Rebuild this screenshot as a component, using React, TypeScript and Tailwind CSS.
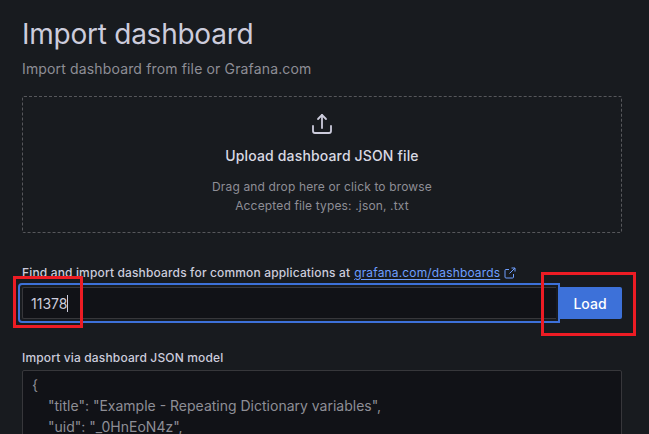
export default function App() {
  return (
    <div className="relative h-[434px] w-[649px] overflow-hidden bg-[#181b1f] pl-[22px] pr-[27px] pt-[16px] font-['Inter',sans-serif] text-[#ccccdc]">
      <h1 className="h-[36px] text-[28px] leading-[36px] font-normal tracking-[-0.25px]">Import dashboard</h1>
      <p className="mt-[6px] text-[14px] leading-[21px] tracking-[0.15px] text-[#8e8e96]">Import dashboard from file or Grafana.com</p>

      <div className="mt-[17px] flex h-[137px] flex-col items-center rounded-[2px] border border-dashed border-[#56575b] pt-[15px]">
        <svg width="24" height="24" viewBox="0 0 24 24" fill="none" stroke="#ccccdc" strokeWidth="1.8" strokeLinecap="round" strokeLinejoin="round">
          <path d="M3 14v5a2 2 0 0 0 2 2h14a2 2 0 0 0 2-2v-5" />
          <path d="M12 16V3" />
          <path d="M8 7l4-4 4 4" />
        </svg>
        <div className="mt-[8px] text-[14px] leading-[24px] font-medium tracking-[0.15px] text-[#d8d9e3]">Upload dashboard JSON file</div>
        <div className="mt-[9px] text-center text-[12px] leading-[19px] tracking-[0.15px] text-[#8e8e96]">
          <div>Drag and drop here or click to browse</div>
          <div>Accepted file types: .json, .txt</div>
        </div>
      </div>

      <div className="mt-[32px] flex h-[16px] items-center text-[12px] font-medium tracking-[0.15px] text-[#ccccdc]">
        <span>Find and import dashboards for common applications at</span>
        <span className="ml-[4px] font-normal text-[#6e9fff] underline underline-offset-2">grafana.com/dashboards</span>
        <svg className="ml-[4px]" width="12" height="12" viewBox="0 0 12 12" fill="none" stroke="#6e9fff" strokeWidth="1">
          <path d="M9.5 7v3a1 1 0 0 1-1 1H2a1 1 0 0 1-1-1V3.500a1 1 0 0 1 1-1h3" />
          <path d="M7.500 1H11v3.500M11 1L5.500 6.500" />
        </svg>
      </div>

      <div className="mt-[2px] flex items-center">
        <div className="-ml-[4px] flex h-[40px] w-[542px] shrink-0 items-center rounded-l-[4px] border-[2px] border-[#3d71d9] p-[2px]">
          <div className="flex h-[32px] w-full items-center rounded-l-[2px] border-y border-l border-[#37373b] bg-[#111217] pl-[8px] text-[14px] text-[#ccccdc]">
            11378
            <span className="h-[17px] w-px bg-[#ccccdc]" />
          </div>
        </div>
        <button className="relative -ml-[2px] flex h-[32px] flex-1 items-center justify-center rounded-r-[2px] bg-[#3d71d9] text-[14px] font-medium text-white">Load</button>
      </div>

      <div className="mt-[27px] h-[16px] text-[12px] leading-[16px] font-medium tracking-[0.15px] text-[#ccccdc]">Import via dashboard JSON model</div>
      <div className="mt-[4px] h-[80px] rounded-[2px] border border-[#37373b] bg-[#111217] pl-[9px] pt-[3px] text-[14px] leading-[21px] text-[#8e8e96]">
        <div>{'{'}</div>
        <div className="pl-[16px]">"title": "Example - Repeating Dictionary variables",</div>
        <div className="pl-[16px]">"uid": "_0HnEoN4z",</div>
      </div>

      {/* red annotation boxes */}
      <div className="absolute left-[13px] top-[276px] h-[52px] w-[70px] border-[3px] border-[#ed1c24]" />
      <div className="absolute left-[541px] top-[272px] h-[64px] w-[95px] border-[3px] border-[#ed1c24]" />
    </div>
  );
}
